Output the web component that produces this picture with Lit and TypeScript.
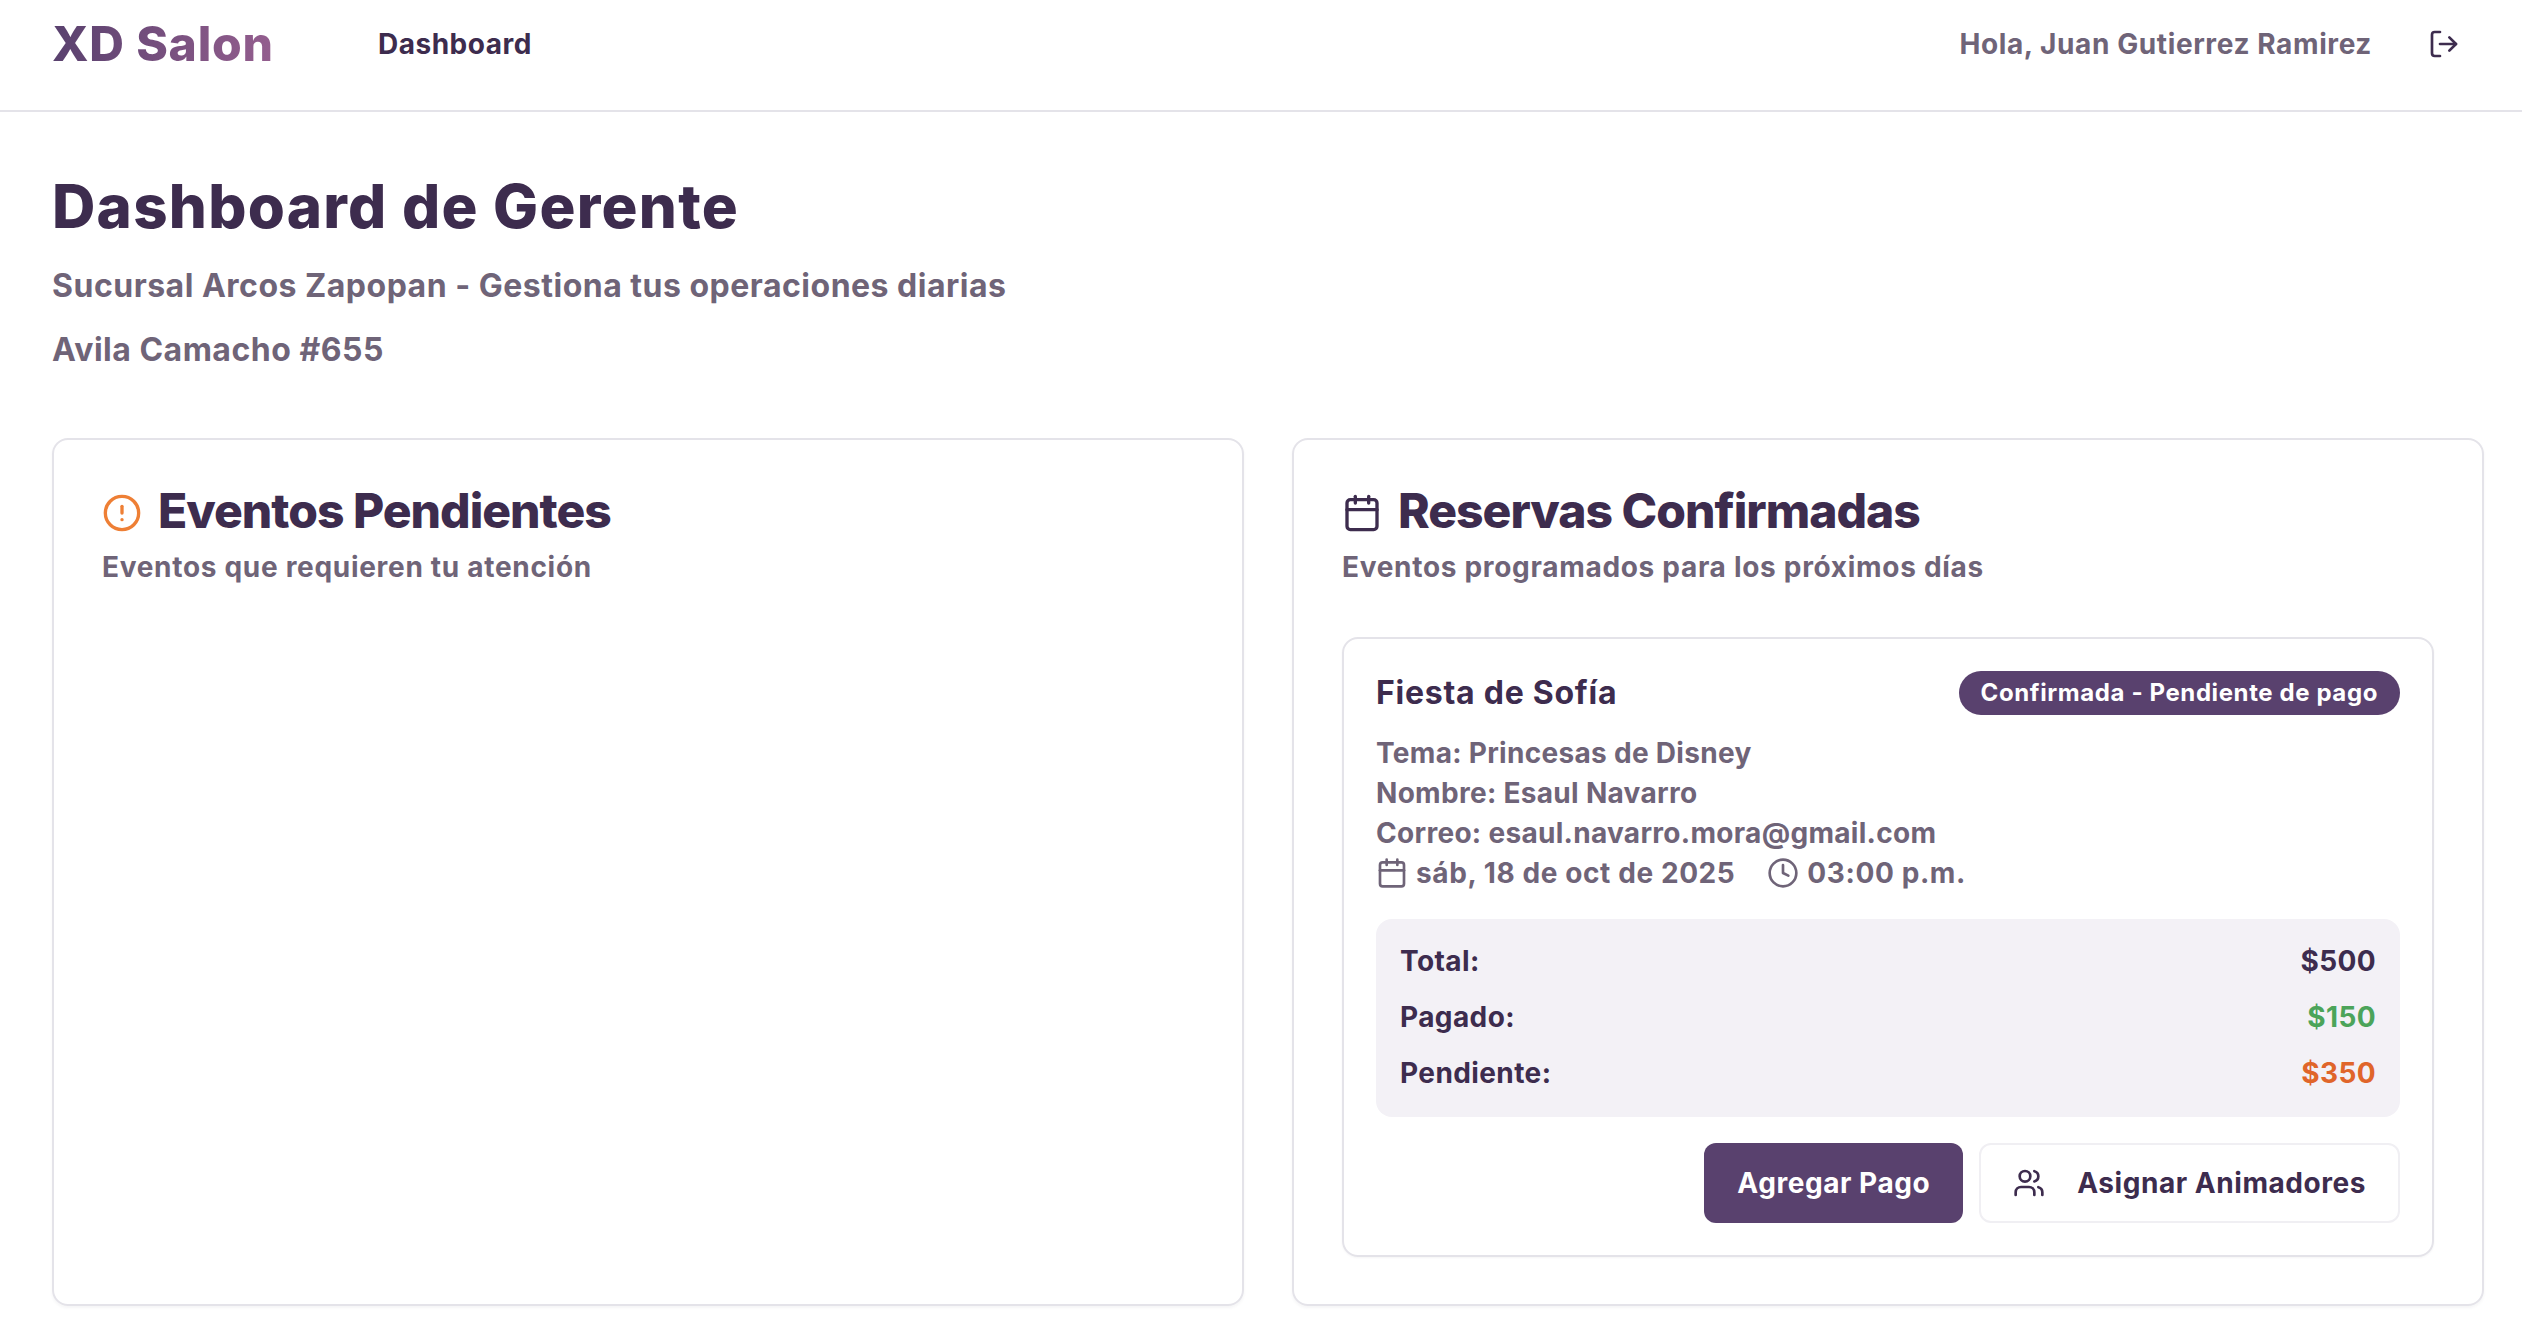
import { LitElement, html, css, svg } from 'lit';
import { customElement } from 'lit/decorators.js';

const icon = (size: number, body: unknown, cls = '') => html`
  <svg class=${cls} width=${size} height=${size} viewBox="0 0 24 24" fill="none" stroke="currentColor"
    stroke-width="2" stroke-linecap="round" stroke-linejoin="round">${body}</svg>`;

const logoutIcon = svg`<path d="M9 21H5a2 2 0 0 1-2-2V5a2 2 0 0 1 2-2h4"/><path d="m16 17 5-5-5-5"/><path d="M21 12H9"/>`;
const alertIcon = svg`<circle cx="12" cy="12" r="10"/><path d="M12 8v4"/><path d="M12 16h.01"/>`;
const calendarIcon = svg`<path d="M8 2v4"/><path d="M16 2v4"/><rect x="3" y="4" width="18" height="18" rx="2"/><path d="M3 10h18"/>`;
const clockIcon = svg`<circle cx="12" cy="12" r="10"/><path d="M12 6v6l4 2"/>`;
const usersIcon = svg`<path d="M16 21v-2a4 4 0 0 0-4-4H6a4 4 0 0 0-4 4v2"/><circle cx="9" cy="7" r="4"/><path d="M22 21v-2a4 4 0 0 0-3-3.87"/><path d="M16 3.13a4 4 0 0 1 0 7.75"/>`;

@customElement('app-root')
export class AppRoot extends LitElement {
  static styles = css`
    :host {
      display: block;
      min-height: 1334px;
      background: #fff;
      color: #3d2c4e;
      font-family: Inter, "Liberation Sans", sans-serif;
      font-weight: 700;
    }
    header {
      display: flex;
      align-items: center;
      height: 88px;
      padding: 0 62px 22px 52px;
      border-bottom: 2px solid #e4e3e9;
    }
    .logo {
      width: 326px;
      font-size: 48px;
      line-height: 56px;
      font-weight: 800;
      letter-spacing: 0.8px;
      background: linear-gradient(90deg, #59416e, #b06c9e);
      -webkit-background-clip: text;
      background-clip: text;
      color: transparent;
    }
    .nav {
      font-size: 28px;
      letter-spacing: 0.5px;
    }
    .spacer { flex: 1; }
    .hello {
      font-size: 28px;
      letter-spacing: 0.6px;
      color: #6f6478;
      margin-right: 56px;
    }
    .logout { display: block; }
    main { padding: 58px 38px 0 52px; }
    h1 {
      margin: 0;
      font-size: 60px;
      line-height: 72px;
      font-weight: 800;
      letter-spacing: 1.25px;
    }
    .sub {
      margin: 0;
      font-size: 32px;
      line-height: 48px;
      letter-spacing: 0.5px;
      color: #6f6478;
    }
    .sub.first { margin-top: 20px; }
    .sub + .sub { margin-top: 16px; }
    .grid {
      display: grid;
      grid-template-columns: 1fr 1fr;
      gap: 48px;
      margin-top: 64px;
    }
    .panel {
      height: 868px;
      box-sizing: border-box;
      border: 2px solid #e4e3e9;
      border-radius: 16px;
      padding: 48px;
      box-shadow: 0 2px 3px rgba(60, 50, 80, 0.05);
    }
    .title {
      display: flex;
      align-items: center;
      gap: 16px;
      margin: 0;
      font-size: 48px;
      line-height: 46px;
      font-weight: 800;
      letter-spacing: -1px;
    }
    .title svg { margin-top: 3px; }
    .orange { color: #ee7f35; }
    .panel-sub {
      margin: 13px 0 0;
      font-size: 28px;
      line-height: 40px;
      letter-spacing: 0.7px;
      color: #6f6478;
    }
    .booking {
      margin-top: 50px;
      border: 2px solid #e4e3e9;
      border-radius: 16px;
      padding: 32px;
      box-shadow: 0 1px 2px rgba(60, 50, 80, 0.05);
    }
    .booking-head {
      display: flex;
      justify-content: space-between;
      align-items: center;
    }
    .booking-name {
      font-size: 32px;
      line-height: 44px;
      letter-spacing: 0.75px;
    }
    .badge {
      font-size: 24px;
      line-height: 44px;
      letter-spacing: 0.6px;
      padding: 0 22px;
      border-radius: 22px;
      background: #59416e;
      color: #fff;
    }
    .details {
      margin-top: 18px;
      font-size: 28px;
      line-height: 40px;
      letter-spacing: 0.3px;
      color: #6f6478;
    }
    .when {
      display: flex;
      align-items: center;
      letter-spacing: 0.6px;
    }
    .when svg { flex: none; }
    .when .date { margin: 0 32px 0 8px; }
    .when .time { margin-left: 8px; }
    .summary {
      margin-top: 26px;
      padding: 14px 24px;
      height: 198px;
      box-sizing: border-box;
      border-radius: 16px;
      background: #f3f1f6;
      font-size: 28px;
      letter-spacing: 0.4px;
    }
    .row {
      display: flex;
      justify-content: space-between;
      line-height: 56px;
    }
    .green { color: #4ca45a; }
    .red { color: #e0652a; }
    .actions {
      display: flex;
      justify-content: flex-end;
      gap: 16px;
      margin-top: 26px;
    }
    .btn {
      display: flex;
      align-items: center;
      height: 80px;
      box-sizing: border-box;
      border-radius: 12px;
      font-size: 28px;
      letter-spacing: 0.55px;
    }
    .btn.primary {
      padding: 0 33px;
      background: #59416e;
      color: #fff;
    }
    .btn.outline {
      padding: 0 32px;
      gap: 32px;
      background: #fff;
      border: 2px solid #f0eff3;
    }
  `;

  render() {
    return html`
      <header>
        <div class="logo">XD Salon</div>
        <div class="nav">Dashboard</div>
        <div class="spacer"></div>
        <div class="hello">Hola, Juan Gutierrez Ramirez</div>
        ${icon(32, logoutIcon, 'logout')}
      </header>
      <main>
        <h1>Dashboard de Gerente</h1>
        <p class="sub first">Sucursal Arcos Zapopan - Gestiona tus operaciones diarias</p>
        <p class="sub">Avila Camacho #655</p>
        <div class="grid">
          <section class="panel">
            <h2 class="title">${icon(40, alertIcon, 'orange')}Eventos Pendientes</h2>
            <p class="panel-sub">Eventos que requieren tu atención</p>
          </section>
          <section class="panel">
            <h2 class="title">${icon(40, calendarIcon)}Reservas Confirmadas</h2>
            <p class="panel-sub">Eventos programados para los próximos días</p>
            <div class="booking">
              <div class="booking-head">
                <div class="booking-name">Fiesta de Sofía</div>
                <div class="badge">Confirmada - Pendiente de pago</div>
              </div>
              <div class="details">
                <div>Tema: Princesas de Disney</div>
                <div>Nombre: Esaul Navarro</div>
                <div>Correo: esaul.navarro.mora@gmail.com</div>
                <div class="when">
                  ${icon(32, calendarIcon)}<span class="date">sáb, 18 de oct de 2025</span>
                  ${icon(32, clockIcon)}<span class="time">03:00 p.m.</span>
                </div>
              </div>
              <div class="summary">
                <div class="row"><span>Total:</span><span>$500</span></div>
                <div class="row"><span>Pagado:</span><span class="green">$150</span></div>
                <div class="row"><span>Pendiente:</span><span class="red">$350</span></div>
              </div>
              <div class="actions">
                <div class="btn primary">Agregar Pago</div>
                <div class="btn outline">${icon(32, usersIcon)}Asignar Animadores</div>
              </div>
            </div>
          </section>
        </div>
      </main>
    `;
  }
}
